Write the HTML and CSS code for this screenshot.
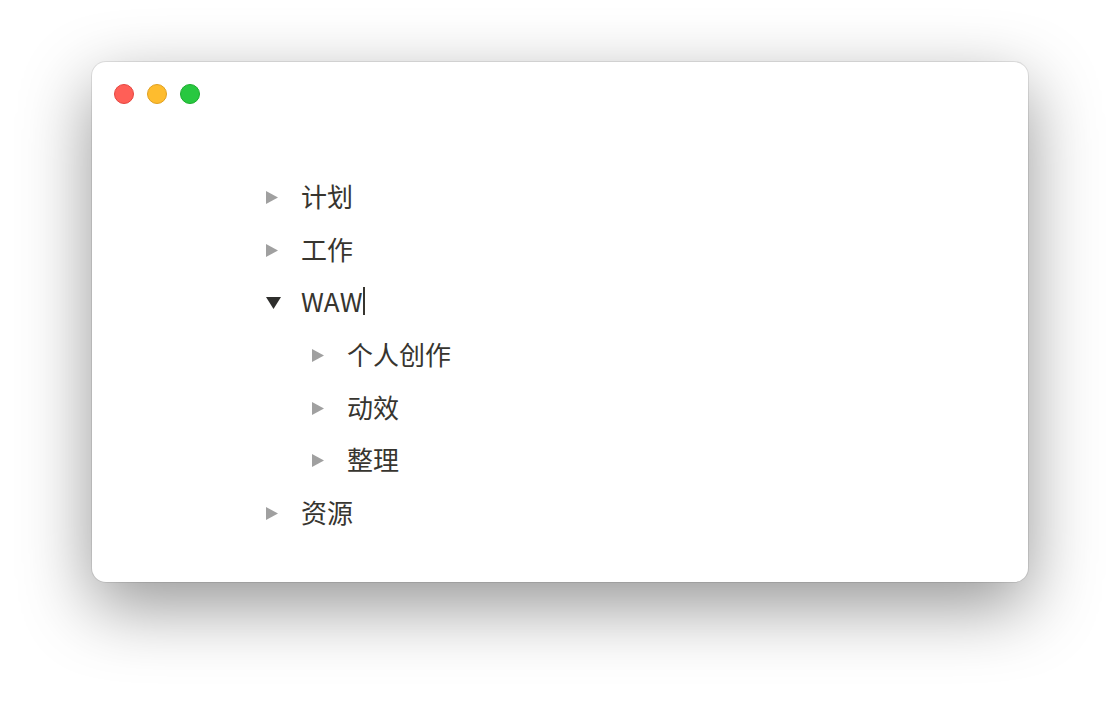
FILE: index.html
```html
<!DOCTYPE html>
<html lang="zh-CN">
<head>
<meta charset="utf-8">
<title>Outline</title>
<link rel="stylesheet" href="styles.css">
</head>
<body>
<div class="window">
  <div class="titlebar">
    <span class="light red"></span>
    <span class="light yellow"></span>
    <span class="light green"></span>
  </div>
  <ul class="tree">
    <li class="row"><span class="caret"><svg width="12" height="13" viewBox="0 0 12 13"><polygon points="0,0 12,6.5 0,13" fill="#a0a0a0"/></svg></span><span class="label">计划</span></li>
    <li class="row"><span class="caret"><svg width="12" height="13" viewBox="0 0 12 13"><polygon points="0,0 12,6.5 0,13" fill="#a0a0a0"/></svg></span><span class="label">工作</span></li>
    <li class="row"><span class="caret"><svg width="15" height="12" viewBox="0 0 15 12"><polygon points="0,0 15,0 7.5,12" fill="#2e2e2c"/></svg></span><span class="label">WAW<span class="cursor"></span></span></li>
    <li class="row nested"><span class="caret"><svg width="12" height="13" viewBox="0 0 12 13"><polygon points="0,0 12,6.5 0,13" fill="#a0a0a0"/></svg></span><span class="label">个人创作</span></li>
    <li class="row nested"><span class="caret"><svg width="12" height="13" viewBox="0 0 12 13"><polygon points="0,0 12,6.5 0,13" fill="#a0a0a0"/></svg></span><span class="label">动效</span></li>
    <li class="row nested"><span class="caret"><svg width="12" height="13" viewBox="0 0 12 13"><polygon points="0,0 12,6.5 0,13" fill="#a0a0a0"/></svg></span><span class="label">整理</span></li>
    <li class="row"><span class="caret"><svg width="12" height="13" viewBox="0 0 12 13"><polygon points="0,0 12,6.5 0,13" fill="#a0a0a0"/></svg></span><span class="label">资源</span></li>
  </ul>
</div>
</body>
</html>
```
FILE: styles.css
```css
html, body {
  margin: 0;
  padding: 0;
  background: #ffffff;
}
body {
  width: 1120px;
  height: 704px;
  padding: 62px 92px 122px;
  box-sizing: border-box;
  font-family: "Noto Sans CJK SC", "Noto Sans", sans-serif;
  overflow: hidden;
}
.window {
  width: 936px;
  height: 520px;
  background: #ffffff;
  border-radius: 14px;
  box-shadow: 0 0 0 1px rgba(0,0,0,0.09), 0 24px 70px rgba(0,0,0,0.42);
  display: flex;
  flex-direction: column;
}
.titlebar {
  display: flex;
  gap: 13px;
  padding: 22px 0 0 22px;
}
.light {
  width: 20px;
  height: 20px;
  border-radius: 50%;
  box-sizing: border-box;
}
.red { background: #ff5f57; border: 1px solid #e5453f; }
.yellow { background: #febc2e; border: 1px solid #e0a020; }
.green { background: #28c840; border: 1px solid #1aad2c; }
.tree {
  list-style: none;
  margin: 66px 0 0;
  padding: 0 0 0 174px;
}
.row {
  display: flex;
  align-items: center;
  height: 52.7px;
}
.row.nested {
  padding-left: 46px;
}
.caret {
  width: 35px;
  display: flex;
  align-items: center;
  padding-top: 2px;
}
.caret svg { display: block; }
.label {
  font-size: 26px;
  color: #37352f;
  display: flex;
  align-items: center;
  margin-bottom: 2px;
}
.cursor {
  display: inline-block;
  width: 1.5px;
  height: 28px;
  background: #37352f;
  margin-left: 1px;
}
```
